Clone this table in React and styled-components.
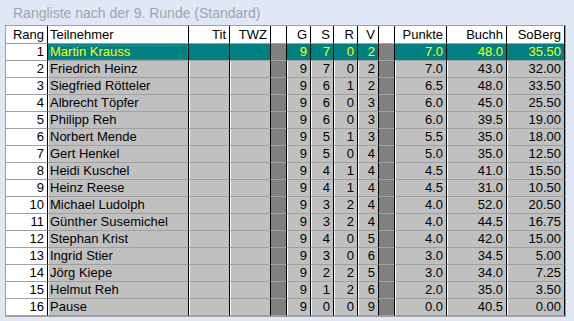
import React from "react";
import styled, { createGlobalStyle } from "styled-components";

const Global = createGlobalStyle`
  html, body { margin: 0; padding: 0; background: #dfe8f4; }
  body { font-family: "Liberation Sans", Arial, sans-serif; }
`;

const COLS = "42px 141px 41px 41px 16px 24px 23px 24px 21px 16px 52px 60px 58px";

const Window = styled.div`
  width: 574px;
  height: 321px;
  background: #dfe8f4;
  overflow: hidden;
`;

const Title = styled.div`
  height: 25px;
  padding-left: 13px;
  font-size: 14px;
  line-height: 26px;
  color: #a0a4aa;
  white-space: nowrap;
`;

const Grid = styled.div`
  margin-left: 5px;
  width: 559px;
  border: 1px solid #a0a0a0;
  background: #fff;
`;

const Row = styled.div`
  display: grid;
  grid-template-columns: ${COLS};
  height: ${(p) => (p.$header ? 18 : 17)}px;
`;

const Cell = styled.div`
  box-sizing: border-box;
  border-right: 1px solid #000;
  border-bottom: 1px solid #a0a0a0;
  padding: 0 3px;
  font-size: 13px;
  line-height: 16px;
  white-space: nowrap;
  overflow: hidden;
  text-align: ${(p) => (p.$left ? "left" : "right")};
  color: ${(p) => (p.$sel ? "#ffff00" : "#000")};
  background: ${(p) =>
    p.$kind === "rang" || p.$kind === "head"
      ? "#fff"
      : p.$kind === "sep"
      ? "#808080"
      : p.$sel
      ? "#008080"
      : "#c0c0c0"};
  box-shadow: ${(p) =>
    p.$kind === "cell" && !p.$sel ? "inset 1px 0 #fff" : "none"};
  ${(p) => (p.$header ? "line-height: 17px;" : "")}
  ${(p) =>
    p.$focus
      ? "outline: 1px dotted #ff5050; outline-offset: -2px; padding-left: 2px;"
      : ""}
  ${(p) => (p.$left && !p.$focus ? "padding-left: 2px;" : "")}
`;

const HeadCell = styled(Cell).attrs({ $kind: "head", $header: true })``;

const data = [
  ["Martin Krauss", 9, 7, 0, 2, "7.0", "48.0", "35.50"],
  ["Friedrich Heinz", 9, 7, 0, 2, "7.0", "43.0", "32.00"],
  ["Siegfried Rötteler", 9, 6, 1, 2, "6.5", "48.0", "33.50"],
  ["Albrecht Töpfer", 9, 6, 0, 3, "6.0", "45.0", "25.50"],
  ["Philipp Reh", 9, 6, 0, 3, "6.0", "39.5", "19.00"],
  ["Norbert Mende", 9, 5, 1, 3, "5.5", "35.0", "18.00"],
  ["Gert Henkel", 9, 5, 0, 4, "5.0", "35.0", "12.50"],
  ["Heidi Kuschel", 9, 4, 1, 4, "4.5", "41.0", "15.50"],
  ["Heinz Reese", 9, 4, 1, 4, "4.5", "31.0", "10.50"],
  ["Michael Ludolph", 9, 3, 2, 4, "4.0", "52.0", "20.50"],
  ["Günther Susemichel", 9, 3, 2, 4, "4.0", "44.5", "16.75"],
  ["Stephan Krist", 9, 4, 0, 5, "4.0", "42.0", "15.00"],
  ["Ingrid Stier", 9, 3, 0, 6, "3.0", "34.5", "5.00"],
  ["Jörg Kiepe", 9, 2, 2, 5, "3.0", "34.0", "7.25"],
  ["Helmut Reh", 9, 1, 2, 6, "2.0", "35.0", "3.50"],
  ["Pause", 9, 0, 0, 9, "0.0", "40.5", "0.00"],
];

export default function App() {
  return (
    <Window>
      <Global />
      <Title>Rangliste nach der 9. Runde (Standard)</Title>
      <Grid>
        <Row $header>
          <HeadCell>Rang</HeadCell>
          <HeadCell $left>Teilnehmer</HeadCell>
          <HeadCell>Tit</HeadCell>
          <HeadCell>TWZ</HeadCell>
          <HeadCell />
          <HeadCell>G</HeadCell>
          <HeadCell>S</HeadCell>
          <HeadCell>R</HeadCell>
          <HeadCell>V</HeadCell>
          <HeadCell />
          <HeadCell>Punkte</HeadCell>
          <HeadCell>Buchh</HeadCell>
          <HeadCell>SoBerg</HeadCell>
        </Row>
        {data.map((r, i) => {
          const sel = i === 0;
          return (
            <Row key={i}>
              <Cell $kind="rang">{i + 1}</Cell>
              <Cell $kind="cell" $sel={sel} $left $focus={sel}>
                {r[0]}
              </Cell>
              <Cell $kind="cell" $sel={sel} />
              <Cell $kind="cell" $sel={sel} />
              <Cell $kind="sep" />
              <Cell $kind="cell" $sel={sel}>{r[1]}</Cell>
              <Cell $kind="cell" $sel={sel}>{r[2]}</Cell>
              <Cell $kind="cell" $sel={sel}>{r[3]}</Cell>
              <Cell $kind="cell" $sel={sel}>{r[4]}</Cell>
              <Cell $kind="sep" />
              <Cell $kind="cell" $sel={sel}>{r[5]}</Cell>
              <Cell $kind="cell" $sel={sel}>{r[6]}</Cell>
              <Cell $kind="cell" $sel={sel}>{r[7]}</Cell>
            </Row>
          );
        })}
      </Grid>
    </Window>
  );
}
